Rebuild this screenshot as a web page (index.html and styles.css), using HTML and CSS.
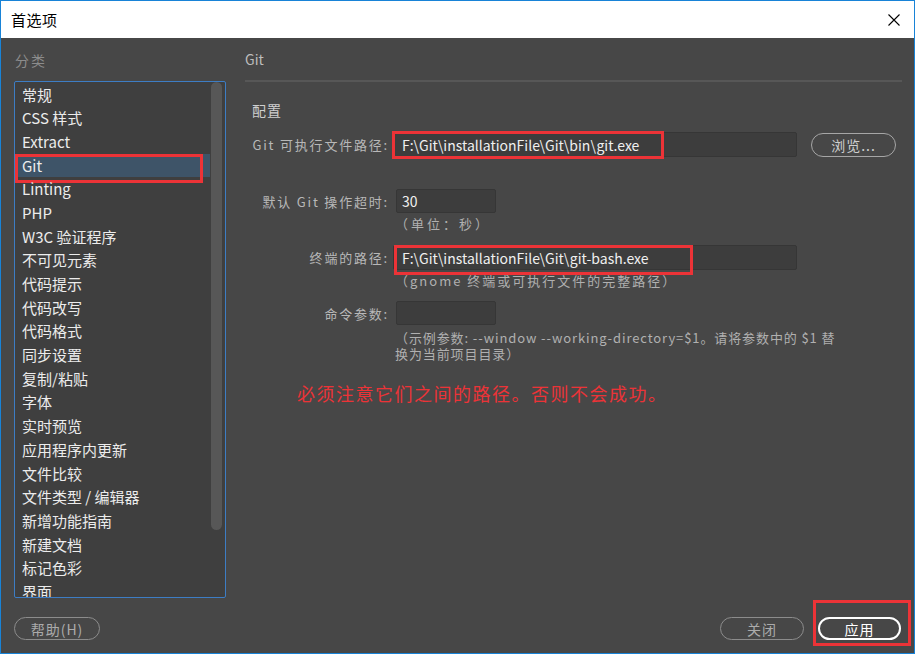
FILE: index.html
```html
<!DOCTYPE html>
<html lang="zh-CN">
<head>
<meta charset="utf-8">
<title>首选项</title>
<link rel="stylesheet" href="styles.css">
</head>
<body>
<div class="window">
  <div class="titlebar">
    <span class="title">首选项</span>
    <svg class="close" width="12" height="12" viewBox="0 0 12 12"><path d="M0.5 0.5L11.5 11.5M11.5 0.5L0.5 11.5" stroke="#000" stroke-width="1.1" fill="none"/></svg>
  </div>
  <div class="body">
    <div class="main">
      <div class="sidebar">
        <div class="side-head">分类</div>
        <div class="listbox">
          <ul class="items">
            <li>常规</li>
            <li>CSS 样式</li>
            <li>Extract</li>
            <li class="selected">Git<span class="mark mark-git"></span></li>
            <li>Linting</li>
            <li>PHP</li>
            <li>W3C 验证程序</li>
            <li>不可见元素</li>
            <li>代码提示</li>
            <li>代码改写</li>
            <li>代码格式</li>
            <li>同步设置</li>
            <li>复制/粘贴</li>
            <li>字体</li>
            <li>实时预览</li>
            <li>应用程序内更新</li>
            <li>文件比较</li>
            <li>文件类型 / 编辑器</li>
            <li>新增功能指南</li>
            <li>新建文档</li>
            <li>标记色彩</li>
            <li>界面</li>
          </ul>
          <div class="scroll"><div class="thumb"></div></div>
        </div>
      </div>
      <div class="pane">
        <div class="pane-head">Git</div>
        <div class="form">
          <div class="group-title">配置</div>
          <div class="row r1">
            <span class="lbl">Git 可执行文件路径:</span>
            <div class="field wide">F:\Git\installationFile\Git\bin\git.exe<span class="mark mark-1"></span></div>
            <button class="btn browse">浏览...</button>
          </div>
          <div class="row r2">
            <span class="lbl">默认 Git 操作超时:</span>
            <div class="field short">30</div>
          </div>
          <div class="hint h1">（单位：秒）</div>
          <div class="row r3">
            <span class="lbl">终端的路径:</span>
            <div class="field wide">F:\Git\installationFile\Git\git-bash.exe<span class="mark mark-3"></span></div>
          </div>
          <div class="hint h2">（gnome 终端或可执行文件的完整路径）</div>
          <div class="row r4">
            <span class="lbl">命令参数:</span>
            <div class="field short"></div>
          </div>
          <div class="hint h3">（示例参数: --window --working-directory=$1。请将参数中的 $1 替<br>换为当前项目目录）</div>
          <div class="warn">必须注意它们之间的路径。否则不会成功。</div>
        </div>
      </div>
    </div>
    <div class="footer">
      <button class="btn help">帮助(H)</button>
      <div class="actions">
        <button class="btn close-btn">关闭</button>
        <span class="anchor"><button class="btn apply">应用</button><span class="mark mark-apply"></span></span>
      </div>
    </div>
  </div>
</div>
</body>
</html>
```

FILE: styles.css
```css
html, body {
  margin: 0;
  padding: 0;
  background: #ffffff;
}
body {
  font-family: "Noto Sans CJK SC", "Noto Sans", sans-serif;
}
.window {
  width: 915px;
  height: 654px;
  box-sizing: border-box;
  border: 1px solid #1883d7;
  background: #474747;
  display: flex;
  flex-direction: column;
}
.titlebar {
  flex: none;
  height: 37px;
  background: #ffffff;
  display: flex;
  align-items: center;
  justify-content: space-between;
  padding: 0 14px 0 10px;
}
.title {
  font-size: 15px;
  color: #000;
  letter-spacing: 0.5px;
}
.close {
  display: block;
}
.body {
  flex: 1;
  display: flex;
  flex-direction: column;
  padding: 0 12px 13px 13px;
}
.main {
  display: flex;
  height: 560px;
}
.sidebar {
  width: 212px;
  flex: none;
  display: flex;
  flex-direction: column;
}
.side-head {
  height: 43px;
  display: flex;
  align-items: center;
  padding-left: 1px;
  font-size: 14px;
  color: #8c8c8c;
  letter-spacing: 2px;
}
.listbox {
  height: 517px;
  box-sizing: border-box;
  border: 1px solid #3d7dc4;
  border-radius: 2px;
  background: #3f3f3f;
  display: flex;
  overflow: hidden;
}
.items {
  list-style: none;
  margin: 0;
  padding: 0.5px 0 0;
  width: 195px;
  flex: none;
}
.items li {
  position: relative;
  height: 23.7px;
  line-height: 23.7px;
  padding-left: 7px;
  font-size: 15px;
  color: #ececec;
  white-space: nowrap;
}
.items li.selected {
  background: #3e5468;
  margin-left: 1px;
  padding-left: 6px;
}
.scroll {
  width: 15px;
  flex: none;
}
.thumb {
  margin-left: 1px;
  width: 11px;
  height: 448px;
  border-radius: 6px;
  background: #575757;
}
.pane {
  flex: 1;
  margin-left: 19px;
}
.pane-head {
  height: 42px;
  border-bottom: 2px solid #575757;
  display: flex;
  align-items: center;
  font-size: 14px;
  color: #bdbdbd;
}
.form {
  padding-left: 7px;
}
.group-title {
  margin-top: 18px;
  line-height: 20px;
  font-size: 14px;
  color: #cfcfcf;
  letter-spacing: 1px;
}
.row {
  display: flex;
  align-items: center;
}
.lbl {
  flex: none;
  width: 137px;
  text-align: right;
  font-size: 13px;
  letter-spacing: 1.8px;
  color: #b8b8b8;
  white-space: nowrap;
}
.field {
  position: relative;
  flex: none;
  height: 25px;
  box-sizing: border-box;
  background: #3d3d3d;
  border: 1px solid #363636;
  border-radius: 2px;
  font-size: 14px;
  color: #f0f0f0;
  padding-left: 8px;
  display: flex;
  align-items: center;
  white-space: nowrap;
}
.field.wide {
  width: 404px;
  margin-left: 4px;
}
.field.short {
  width: 100px;
  height: 24px;
  margin-left: 7px;
  padding-left: 5px;
}
.btn {
  box-sizing: border-box;
  height: 23px;
  border: 1px solid #8c8c8c;
  border-radius: 12px;
  background: transparent;
  color: #ababab;
  font-family: inherit;
  font-size: 14px;
  letter-spacing: 1px;
  padding: 0;
  display: flex;
  align-items: center;
  justify-content: center;
}
.browse {
  margin-left: 14px;
  width: 85px;
  height: 24px;
  border-color: #a6a6a6;
  color: #cfcfcf;
}
.r1 { margin-top: 12px; }
.r2 { margin-top: 32px; }
.r3 { margin-top: 13px; }
.r4 { margin-top: 12px; }
.hint {
  margin-left: 143px;
  font-size: 13px;
  color: #b0b0b0;
  letter-spacing: 2px;
  line-height: 16px;
  white-space: nowrap;
}
.h1 { margin-top: 3px; letter-spacing: 3px; }
.h2 { margin-top: 3px; }
.h3 { margin-top: 5px; line-height: 15.5px; letter-spacing: 0.9px; }
.warn {
  margin-left: 45px;
  margin-top: 20px;
  line-height: 24px;
  font-size: 18px;
  color: #ec3337;
  letter-spacing: 1.5px;
}
.footer {
  display: flex;
  justify-content: space-between;
  margin-top: 19px;
  height: 23px;
}
.help { width: 86px; }
.actions {
  display: flex;
  gap: 14px;
  margin-right: 1px;
}
.close-btn { width: 84px; }
.anchor {
  position: relative;
  display: block;
}
.apply {
  width: 83px;
  border: 2px solid #ffffff;
  color: #ffffff;
}
.mark {
  position: absolute;
  box-sizing: border-box;
  border: 3px solid #ec3337;
  pointer-events: none;
}
.mark-git { left: -1px; top: 0; width: 188px; height: 29px; }
.mark-1 { left: -2px; top: -2px; width: 272px; height: 28px; }
.mark-3 { left: 0; top: -1px; width: 299px; height: 30px; }
.mark-apply { left: -5px; top: -17px; width: 98px; height: 46px; }
```
